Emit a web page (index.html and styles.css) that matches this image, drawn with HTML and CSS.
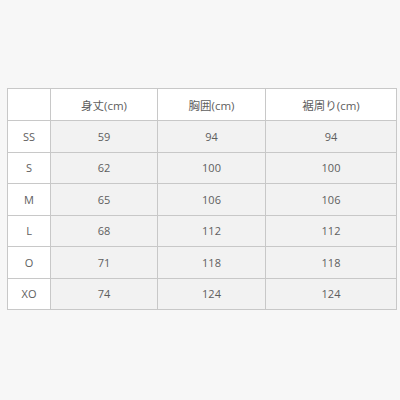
FILE: index.html
```html
<!DOCTYPE html>
<html lang="ja">
<head>
<meta charset="utf-8">
<link rel="stylesheet" href="styles.css">
</head>
<body>
<div class="wrap">
<table class="size">
  <colgroup>
    <col class="c0"><col class="c1"><col class="c2"><col class="c3">
  </colgroup>
  <thead>
    <tr><th></th><th>身丈(cm)</th><th>胸囲(cm)</th><th>裾周り(cm)</th></tr>
  </thead>
  <tbody>
    <tr><th>SS</th><td>59</td><td>94</td><td>94</td></tr>
    <tr><th>S</th><td>62</td><td>100</td><td>100</td></tr>
    <tr><th>M</th><td>65</td><td>106</td><td>106</td></tr>
    <tr><th>L</th><td>68</td><td>112</td><td>112</td></tr>
    <tr><th>O</th><td>71</td><td>118</td><td>118</td></tr>
    <tr><th>XO</th><td>74</td><td>124</td><td>124</td></tr>
  </tbody>
</table>
</div>
</body>
</html>
```
FILE: styles.css
```css
html, body {
  margin: 0;
  padding: 0;
  background: #f7f7f7;
}
.wrap {
  padding: 88px 4px 0 7px;
}
.size {
  border-collapse: collapse;
  width: 389px;
  table-layout: fixed;
  font-family: "Open Sans", "Noto Sans CJK JP", sans-serif;
  font-size: 11px;
  color: #5e5e5e;
}
.c0 { width: 43px; }
.c1 { width: 107px; }
.c2 { width: 108px; }
.c3 { width: 131px; }
.size th, .size td {
  border: 1px solid #c8c8c8;
  height: 30.5px;
  padding: 0;
  text-align: center;
  font-weight: normal;
  vertical-align: middle;
}
.size thead th {
  background: #fff;
  height: 31px;
  font-size: 11.5px;
}
.size tbody th {
  background: #fff;
}
.size tbody td {
  background: #f2f2f2;
}
```
